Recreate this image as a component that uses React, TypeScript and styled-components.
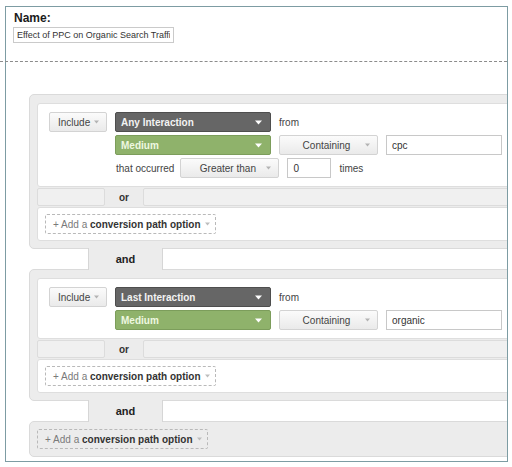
import React from "react";
import styled, { createGlobalStyle } from "styled-components";

const GlobalStyle = createGlobalStyle`
  html, body { margin: 0; padding: 0; background: #fff; }
  body { font-family: "Liberation Sans", Arial, sans-serif; }
`;

const Frame = styled.div`
  margin: 6px 0 0 5px;
  width: 503px;
  height: 456px;
  box-sizing: border-box;
  border: 1px solid #7d9ca3;
  display: flex;
  flex-direction: column;
`;

const Header = styled.div`
  padding: 4px 0 0 8px;
  display: flex;
  flex-direction: column;
  align-items: flex-start;
`;

const NameLabel = styled.div`
  font: bold 12px/14px "Liberation Sans", Arial, sans-serif;
  color: #1b1b1b;
`;

const NameInput = styled.input`
  margin: 2px 0 0 -1px;
  width: 161px;
  height: 16px;
  box-sizing: border-box;
  border: 1px solid #cacaca;
  padding: 0 3px;
  font: 9px "Liberation Sans", Arial, sans-serif;
  color: #333;
  background: #fff;
  outline: none;
`;

const Divider = styled.div`
  margin: 18px 0 0 -6px;
  width: calc(100% + 6px);
  border-top: 1px dashed #8c8c8c;
`;

const Body = styled.div`
  flex: 1;
  overflow: hidden;
  padding: 32px 0 0 23px;
`;

const Groups = styled.div`
  width: 520px;
  display: flex;
  flex-direction: column;
`;

const Group = styled.div<{ $tight?: boolean }>`
  background: #ececec;
  border: 1px solid #dadada;
  border-radius: 5px;
  padding: ${(p) => (p.$tight ? "7px 7px" : "8px 7px 7px")};
  display: flex;
  flex-direction: column;
`;

const Card = styled.div<{ $compact?: boolean }>`
  background: #fff;
  border: 1px solid #dedede;
  border-radius: 3px;
  padding: ${(p) => (p.$compact ? "6px 7px" : "8px 11px")};
  display: ${(p) => (p.$compact ? "flex" : "grid")};
  grid-template-columns: 58px 1fr;
  column-gap: 8px;
  align-items: start;
`;

const Rows = styled.div`
  display: flex;
  flex-direction: column;
  gap: 3px;
`;

const Row = styled.div`
  display: flex;
  align-items: center;
  gap: 8px;
  height: 20px;
`;

const Label = styled.span<{ $indent?: number }>`
  font-size: 10px;
  color: #444;
  margin-left: ${(p) => p.$indent ?? 0}px;
  margin-right: ${(p) => (p.$indent ? -2 : 0)}px;
  white-space: nowrap;
`;

const LightButton = styled.div<{ $w: number; $left?: number }>`
  width: ${(p) => p.$w}px;
  height: 20px;
  box-sizing: border-box;
  display: flex;
  align-items: center;
  gap: 4px;
  padding: 0 7px 0 ${(p) => p.$left ?? 12}px;
  border: 1px solid #d3d3d3;
  border-radius: 2px;
  background: linear-gradient(#fbfbfb, #eaeaea);
  font-size: 10px;
  color: #444;
`;

const BtnText = styled.span`
  flex: 1;
  text-align: center;
  white-space: nowrap;
`;

const Dropdown = styled.div<{ $tone: "dark" | "green" }>`
  width: 156px;
  height: 20px;
  box-sizing: border-box;
  display: flex;
  align-items: center;
  justify-content: space-between;
  padding: 0 8px 0 5px;
  border-radius: 2px;
  font-weight: bold;
  font-size: 10px;
  background: ${(p) => (p.$tone === "dark" ? "#666666" : "#8fb26b")};
  border: 1px solid ${(p) => (p.$tone === "dark" ? "#4e4e4e" : "#7c9d5b")};
  color: ${(p) => (p.$tone === "dark" ? "#f3f3f3" : "#eef8e0")};
`;

const Field = styled.div<{ $w: number }>`
  width: ${(p) => p.$w}px;
  height: 20px;
  box-sizing: border-box;
  border: 1px solid #c8c8c8;
  background: #fff;
  padding: 0 5px;
  display: flex;
  align-items: center;
  font-size: 10px;
  color: #333;
`;

const OrRow = styled.div`
  display: flex;
  height: 20px;
  align-items: stretch;
`;

const OrSide = styled.div<{ $w?: number }>`
  ${(p) => (p.$w ? `width: ${p.$w}px;` : "flex: 1;")}
  box-sizing: border-box;
  margin: 1px 0;
  background: #f0f0f0;
  border: 1px solid #dcdcdc;
  border-radius: 2px;
`;

const OrTab = styled.div`
  width: 38px;
  display: flex;
  align-items: center;
  justify-content: center;
  font-weight: bold;
  font-size: 10px;
  color: #333;
`;

const AndRow = styled.div`
  display: flex;
  height: 20px;
`;

const AndSpacer = styled.div`
  width: 59px;
`;

const AndTab = styled.div`
  width: 75px;
  box-sizing: border-box;
  margin: -1px 0;
  position: relative;
  z-index: 1;
  background: #ececec;
  border-left: 1px solid #d6d6d6;
  border-right: 1px solid #d6d6d6;
  display: flex;
  align-items: center;
  justify-content: center;
  font-weight: bold;
  font-size: 11px;
  color: #222;
`;

const AddOption = styled.div`
  height: 20px;
  box-sizing: border-box;
  display: inline-flex;
  align-items: center;
  gap: 4px;
  padding: 0 5px 0 7px;
  border: 1px dashed #b9b9b9;
  border-radius: 2px;
  font-size: 10px;
  color: #7a7a7a;
  white-space: nowrap;
  align-self: flex-start;
`;

const Strong = styled.b`
  color: #333;
`;

const Caret = ({ color, w = 5 }: { color: string; w?: number }) => (
  <svg width={w} height={Math.ceil(w / 2) + 1} viewBox="0 0 10 6" style={{ flex: "none" }}>
    <path d="M0 0 L10 0 L5 6 Z" fill={color} />
  </svg>
);

const Add = () => (
  <AddOption>
    <span>
      + Add a <Strong>conversion path option</Strong>
    </span>
    <Caret color="#bdbdbd" />
  </AddOption>
);

const Light = ({ text, w, left }: { text: string; w: number; left?: number }) => (
  <LightButton $w={w} $left={left}>
    <BtnText>{text}</BtnText>
    <Caret color="#b3b3b3" />
  </LightButton>
);

const Select = ({ tone, text }: { tone: "dark" | "green"; text: string }) => (
  <Dropdown $tone={tone}>
    <span>{text}</span>
    <Caret color="#ffffff" w={7} />
  </Dropdown>
);

export default function App() {
  return (
    <>
      <GlobalStyle />
      <Frame>
        <Header>
          <NameLabel>Name:</NameLabel>
          <NameInput readOnly value="Effect of PPC on Organic Search Traffic" />
        </Header>
        <Divider />
        <Body>
          <Groups>
            <Group>
              <Card>
                <Light text="Include" w={58} left={8} />
                <Rows>
                  <Row>
                    <Select tone="dark" text="Any Interaction" />
                    <Label>from</Label>
                  </Row>
                  <Row>
                    <Select tone="green" text="Medium" />
                    <Light text="Containing" w={99} />
                    <Field $w={116}>cpc</Field>
                  </Row>
                  <Row>
                    <Label $indent={1}>that occurred</Label>
                    <Light text="Greater than" w={99} />
                    <Field $w={44}>0</Field>
                    <Label>times</Label>
                  </Row>
                </Rows>
              </Card>
              <OrRow>
                <OrSide $w={68} />
                <OrTab>or</OrTab>
                <OrSide />
              </OrRow>
              <Card $compact>
                <Add />
              </Card>
            </Group>
            <AndRow>
              <AndSpacer />
              <AndTab>and</AndTab>
            </AndRow>
            <Group>
              <Card>
                <Light text="Include" w={58} left={8} />
                <Rows>
                  <Row>
                    <Select tone="dark" text="Last Interaction" />
                    <Label>from</Label>
                  </Row>
                  <Row>
                    <Select tone="green" text="Medium" />
                    <Light text="Containing" w={99} />
                    <Field $w={116}>organic</Field>
                  </Row>
                </Rows>
              </Card>
              <OrRow>
                <OrSide $w={68} />
                <OrTab>or</OrTab>
                <OrSide />
              </OrRow>
              <Card $compact>
                <Add />
              </Card>
            </Group>
            <AndRow>
              <AndSpacer />
              <AndTab>and</AndTab>
            </AndRow>
            <Group $tight>
              <Add />
            </Group>
          </Groups>
        </Body>
      </Frame>
    </>
  );
}
